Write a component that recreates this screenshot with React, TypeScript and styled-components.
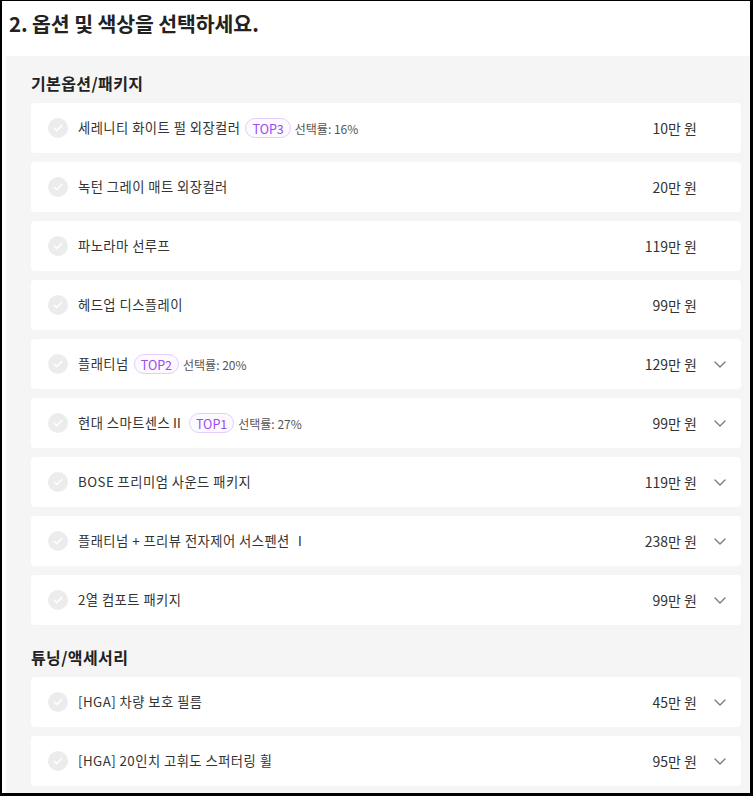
import styled, { createGlobalStyle } from "styled-components";

type Option = {
  name: string;
  price: string;
  top?: string;
  rate?: string;
  expandable?: boolean;
};

const basicOptions: Option[] = [
  { name: "세레니티 화이트 펄 외장컬러", price: "10만 원", top: "TOP3", rate: "16%" },
  { name: "녹턴 그레이 매트 외장컬러", price: "20만 원" },
  { name: "파노라마 선루프", price: "119만 원" },
  { name: "헤드업 디스플레이", price: "99만 원" },
  { name: "플래티넘", price: "129만 원", top: "TOP2", rate: "20%", expandable: true },
  { name: "현대 스마트센스Ⅱ", price: "99만 원", top: "TOP1", rate: "27%", expandable: true },
  { name: "BOSE 프리미엄 사운드 패키지", price: "119만 원", expandable: true },
  { name: "플래티넘 + 프리뷰 전자제어 서스펜션 Ⅰ", price: "238만 원", expandable: true },
  { name: "2열 컴포트 패키지", price: "99만 원", expandable: true },
];

const tuningOptions: Option[] = [
  { name: "[HGA] 차량 보호 필름", price: "45만 원", expandable: true },
  { name: "[HGA] 20인치 고휘도 스퍼터링 휠", price: "95만 원", expandable: true },
];

const GlobalStyle = createGlobalStyle`
  html, body {
    margin: 0;
    padding: 0;
    background: #fff;
  }
  body {
    font-family: "Noto Sans CJK KR", "Noto Sans", sans-serif;
    color: #222;
  }
`;

const Frame = styled.div`
  box-sizing: border-box;
  width: 753px;
  height: 796px;
  overflow: hidden;
  border: 2px solid #000;
  border-top-width: 1px;
  border-right-width: 3px;
  border-bottom-width: 3px;
  padding-left: 4px;
  display: flex;
  flex-direction: column;
`;

const Title = styled.h2`
  flex-shrink: 0;
  margin: 0;
  padding: 8px 0 0 3px;
  height: 55px;
  box-sizing: border-box;
  font-size: 20.5px;
  font-weight: 700;
  line-height: 28px;
  color: #222;
  letter-spacing: -0.1px;
`;

const Panel = styled.div`
  flex: 1;
  min-height: 0;
  overflow: hidden;
  background: #f5f5f5;
  padding: 15px 9px 7px 25px;
  display: flex;
  flex-direction: column;
`;

const SectionTitle = styled.h3<{ $first?: boolean }>`
  flex-shrink: 0;
  margin: ${(p) => (p.$first ? "0" : "20px")} 0 8px;
  font-size: 16px;
  font-weight: 700;
  line-height: 24px;
  letter-spacing: 0.4px;
  color: #222;
`;

const List = styled.div`
  flex-shrink: 0;
  display: flex;
  flex-direction: column;
  gap: 9px;
`;

const Card = styled.div`
  height: 50px;
  flex-shrink: 0;
  background: #fff;
  border-radius: 4px;
  display: flex;
  align-items: center;
  padding: 0 13px 0 17px;
`;

const Check = styled.span`
  width: 20px;
  height: 20px;
  border-radius: 50%;
  background: #ececec;
  display: flex;
  align-items: center;
  justify-content: center;
  flex-shrink: 0;
  margin-right: 10px;
`;

const Name = styled.span`
  font-size: 13.3px;
  color: #333;
  line-height: 20px;
  letter-spacing: 0.45px;
`;

const Badge = styled.span`
  margin-left: 5px;
  height: 20px;
  padding: 0 6px;
  border: 1px solid #e2cffc;
  background: #fcf9ff;
  border-radius: 10px;
  color: #9a4cf0;
  font-size: 12.5px;
  box-sizing: border-box;
  display: inline-flex;
  align-items: center;
`;

const Rate = styled.span`
  margin-left: 4px;
  font-size: 12px;
  color: #555;
`;

const Price = styled.span`
  margin-left: auto;
  font-size: 14px;
  color: #333;
`;

const Chevron = styled.span`
  width: 16px;
  height: 16px;
  margin-left: 15px;
  display: flex;
  align-items: center;
  justify-content: center;
`;

const CheckIcon = () => (
  <svg width="10" height="8" viewBox="0 0 10 8" fill="none">
    <path d="M1.2 4.2 L3.8 6.6 L8.8 1.4" stroke="#fff" strokeWidth="1.5" strokeLinecap="round" strokeLinejoin="round" />
  </svg>
);

const ChevronIcon = () => (
  <svg width="12" height="7" viewBox="0 0 12 7" fill="none">
    <path d="M1 1 L6 6 L11 1" stroke="#777" strokeWidth="1.3" strokeLinecap="round" strokeLinejoin="round" />
  </svg>
);

const OptionRow = ({ option }: { option: Option }) => (
  <Card>
    <Check>
      <CheckIcon />
    </Check>
    <Name>{option.name}</Name>
    {option.top && <Badge>{option.top}</Badge>}
    {option.rate && <Rate>선택률: {option.rate}</Rate>}
    <Price>{option.price}</Price>
    <Chevron>{option.expandable && <ChevronIcon />}</Chevron>
  </Card>
);

export default function App() {
  return (
    <>
      <GlobalStyle />
      <Frame>
        <Title>2. 옵션 및 색상을 선택하세요.</Title>
        <Panel>
          <SectionTitle $first>기본옵션/패키지</SectionTitle>
          <List>
            {basicOptions.map((o) => (
              <OptionRow key={o.name} option={o} />
            ))}
          </List>
          <SectionTitle>튜닝/액세서리</SectionTitle>
          <List>
            {tuningOptions.map((o) => (
              <OptionRow key={o.name} option={o} />
            ))}
          </List>
        </Panel>
      </Frame>
    </>
  );
}
